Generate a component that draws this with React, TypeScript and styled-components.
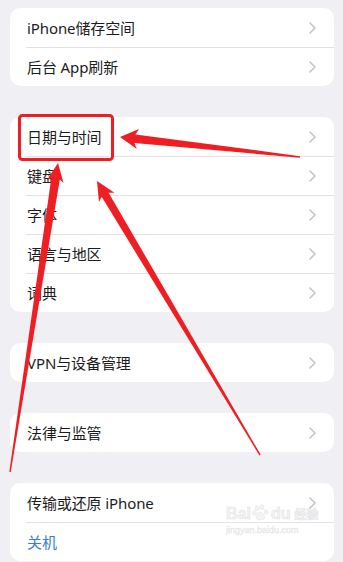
import React from "react";
import styled, { createGlobalStyle } from "styled-components";

const GlobalStyle = createGlobalStyle`
  html, body {
    margin: 0;
    padding: 0;
    background: #efeff4;
  }
  body {
    font-family: "Noto Sans", "Noto Sans CJK SC", sans-serif;
    -webkit-font-smoothing: antialiased;
  }
`;

const Page = styled.div`
  position: relative;
  width: 343px;
  height: 562px;
  overflow: hidden;
  box-sizing: border-box;
  padding: 8px 9px 0 10px;
  display: flex;
  flex-direction: column;
  gap: 31px;
  background: #efeff4;
`;

const Card = styled.div`
  background: #ffffff;
  border-radius: 10px;
  overflow: hidden;
  display: flex;
  flex-direction: column;
  flex-shrink: 0;
`;

const Row = styled.div`
  display: flex;
  padding-left: 16px;
`;

const RowInner = styled.div<{ $divider: boolean }>`
  flex: 1;
  height: 39px;
  box-sizing: border-box;
  display: flex;
  align-items: center;
  padding-left: 1px;
  padding-right: 18px;
  border-top: ${(p) => (p.$divider ? "1px solid #e2e2e6" : "none")};
`;

const Label = styled.span<{ $action?: boolean }>`
  flex: 1;
  font-size: 15px;
  line-height: 20px;
  color: ${(p) => (p.$action ? "#3a7ad8" : "#1c1c1e")};
  letter-spacing: -0.1px;
`;

const Overlay = styled.svg`
  position: absolute;
  left: 0;
  top: 0;
  pointer-events: none;
`;

const Watermark = styled.div`
  position: absolute;
  left: 226px;
  top: 504px;
  display: flex;
  flex-direction: column;
  align-items: flex-start;
  opacity: 0.5;
  pointer-events: none;
`;

const WmLogo = styled.div`
  display: flex;
  align-items: flex-end;
  gap: 1px;
  font-family: "Liberation Sans", sans-serif;
  font-weight: 700;
  font-size: 16px;
  line-height: 16px;
  color: #e9e9eb;
  -webkit-text-stroke: 0.6px #c8c8cc;
`;

const WmCn = styled.span`
  font-family: "Noto Sans CJK SC", sans-serif;
  font-size: 12px;
  margin-left: 3px;
`;

const WmUrl = styled.div`
  font-family: "Liberation Sans", sans-serif;
  font-size: 9px;
  line-height: 10px;
  color: #e9e9eb;
  -webkit-text-stroke: 0.4px #c8c8cc;
  margin-top: 3px;
`;

const Chevron = () => (
  <svg width="7" height="12" viewBox="0 0 7 12">
    <path
      d="M1 1 L6 6 L1 11"
      fill="none"
      stroke="#c4c4c8"
      strokeWidth="1.6"
      strokeLinecap="round"
      strokeLinejoin="round"
    />
  </svg>
);

type Item = { label: string; action?: boolean };

const groups: Item[][] = [
  [{ label: "iPhone储存空间" }, { label: "后台 App刷新" }],
  [
    { label: "日期与时间" },
    { label: "键盘" },
    { label: "字体" },
    { label: "语言与地区" },
    { label: "词典" },
  ],
  [{ label: "VPN与设备管理" }],
  [{ label: "法律与监管" }],
  [{ label: "传输或还原 iPhone" }, { label: "关机", action: true }],
];

type P = [number, number];

function arrow(tip: P, tail: P, headLen: number, headHalf: number, shaftHalf: number, tailHalf: number): string {
  const dx = tail[0] - tip[0];
  const dy = tail[1] - tip[1];
  const len = Math.hypot(dx, dy);
  const u: P = [dx / len, dy / len];
  const n: P = [-u[1], u[0]];
  const at = (d: number, w: number): P => [tip[0] + u[0] * d + n[0] * w, tip[1] + u[1] * d + n[1] * w];
  const pts: P[] = [
    tip,
    at(headLen, headHalf),
    at(headLen - 3, shaftHalf),
    at(len, tailHalf),
    at(len, -tailHalf),
    at(headLen - 3, -shaftHalf),
    at(headLen, -headHalf),
  ];
  return pts.map((p) => `${p[0].toFixed(1)},${p[1].toFixed(1)}`).join(" ");
}

const RED = "#ee1e22";

export default function App() {
  return (
    <>
      <GlobalStyle />
      <Page>
        {groups.map((g, gi) => (
          <Card key={gi}>
            {g.map((it, i) => (
              <Row key={it.label}>
                <RowInner $divider={i > 0}>
                  <Label $action={it.action}>{it.label}</Label>
                  {!it.action && <Chevron />}
                </RowInner>
              </Row>
            ))}
          </Card>
        ))}
        <Watermark>
          <WmLogo>
            <span>Bai</span>
            <svg width="18" height="18" viewBox="0 0 18 18">
              <g fill="#e9e9eb" stroke="#c8c8cc" strokeWidth="0.6">
                <ellipse cx="5" cy="4" rx="2" ry="2.5" />
                <ellipse cx="10" cy="3" rx="2" ry="2.5" />
                <ellipse cx="2.5" cy="9" rx="1.8" ry="2.2" />
                <ellipse cx="14" cy="8" rx="1.8" ry="2.2" />
                <path d="M8 8 C5 9 3 13 5 15 C7 16 10 16 12 15 C14 13 11 9 8 8 Z" />
              </g>
            </svg>
            <span>du</span>
            <WmCn>经验</WmCn>
          </WmLogo>
          <WmUrl>jingyan.baidu.com</WmUrl>
        </Watermark>
        <Overlay width="343" height="562" viewBox="0 0 343 562">
          <rect x="19.5" y="115.5" width="93" height="44" rx="3" fill="none" stroke={RED} strokeWidth="3" />
          <polygon points={arrow([120, 137], [300, 157], 18, 10, 4.3, 0.8)} fill={RED} />
          <polygon points={arrow([58, 163], [10, 472], 19, 8.5, 4.3, 0.7)} fill={RED} />
          <polygon points={arrow([97, 181], [260, 455], 19, 9, 4.0, 0.7)} fill={RED} />
        </Overlay>
      </Page>
    </>
  );
}
